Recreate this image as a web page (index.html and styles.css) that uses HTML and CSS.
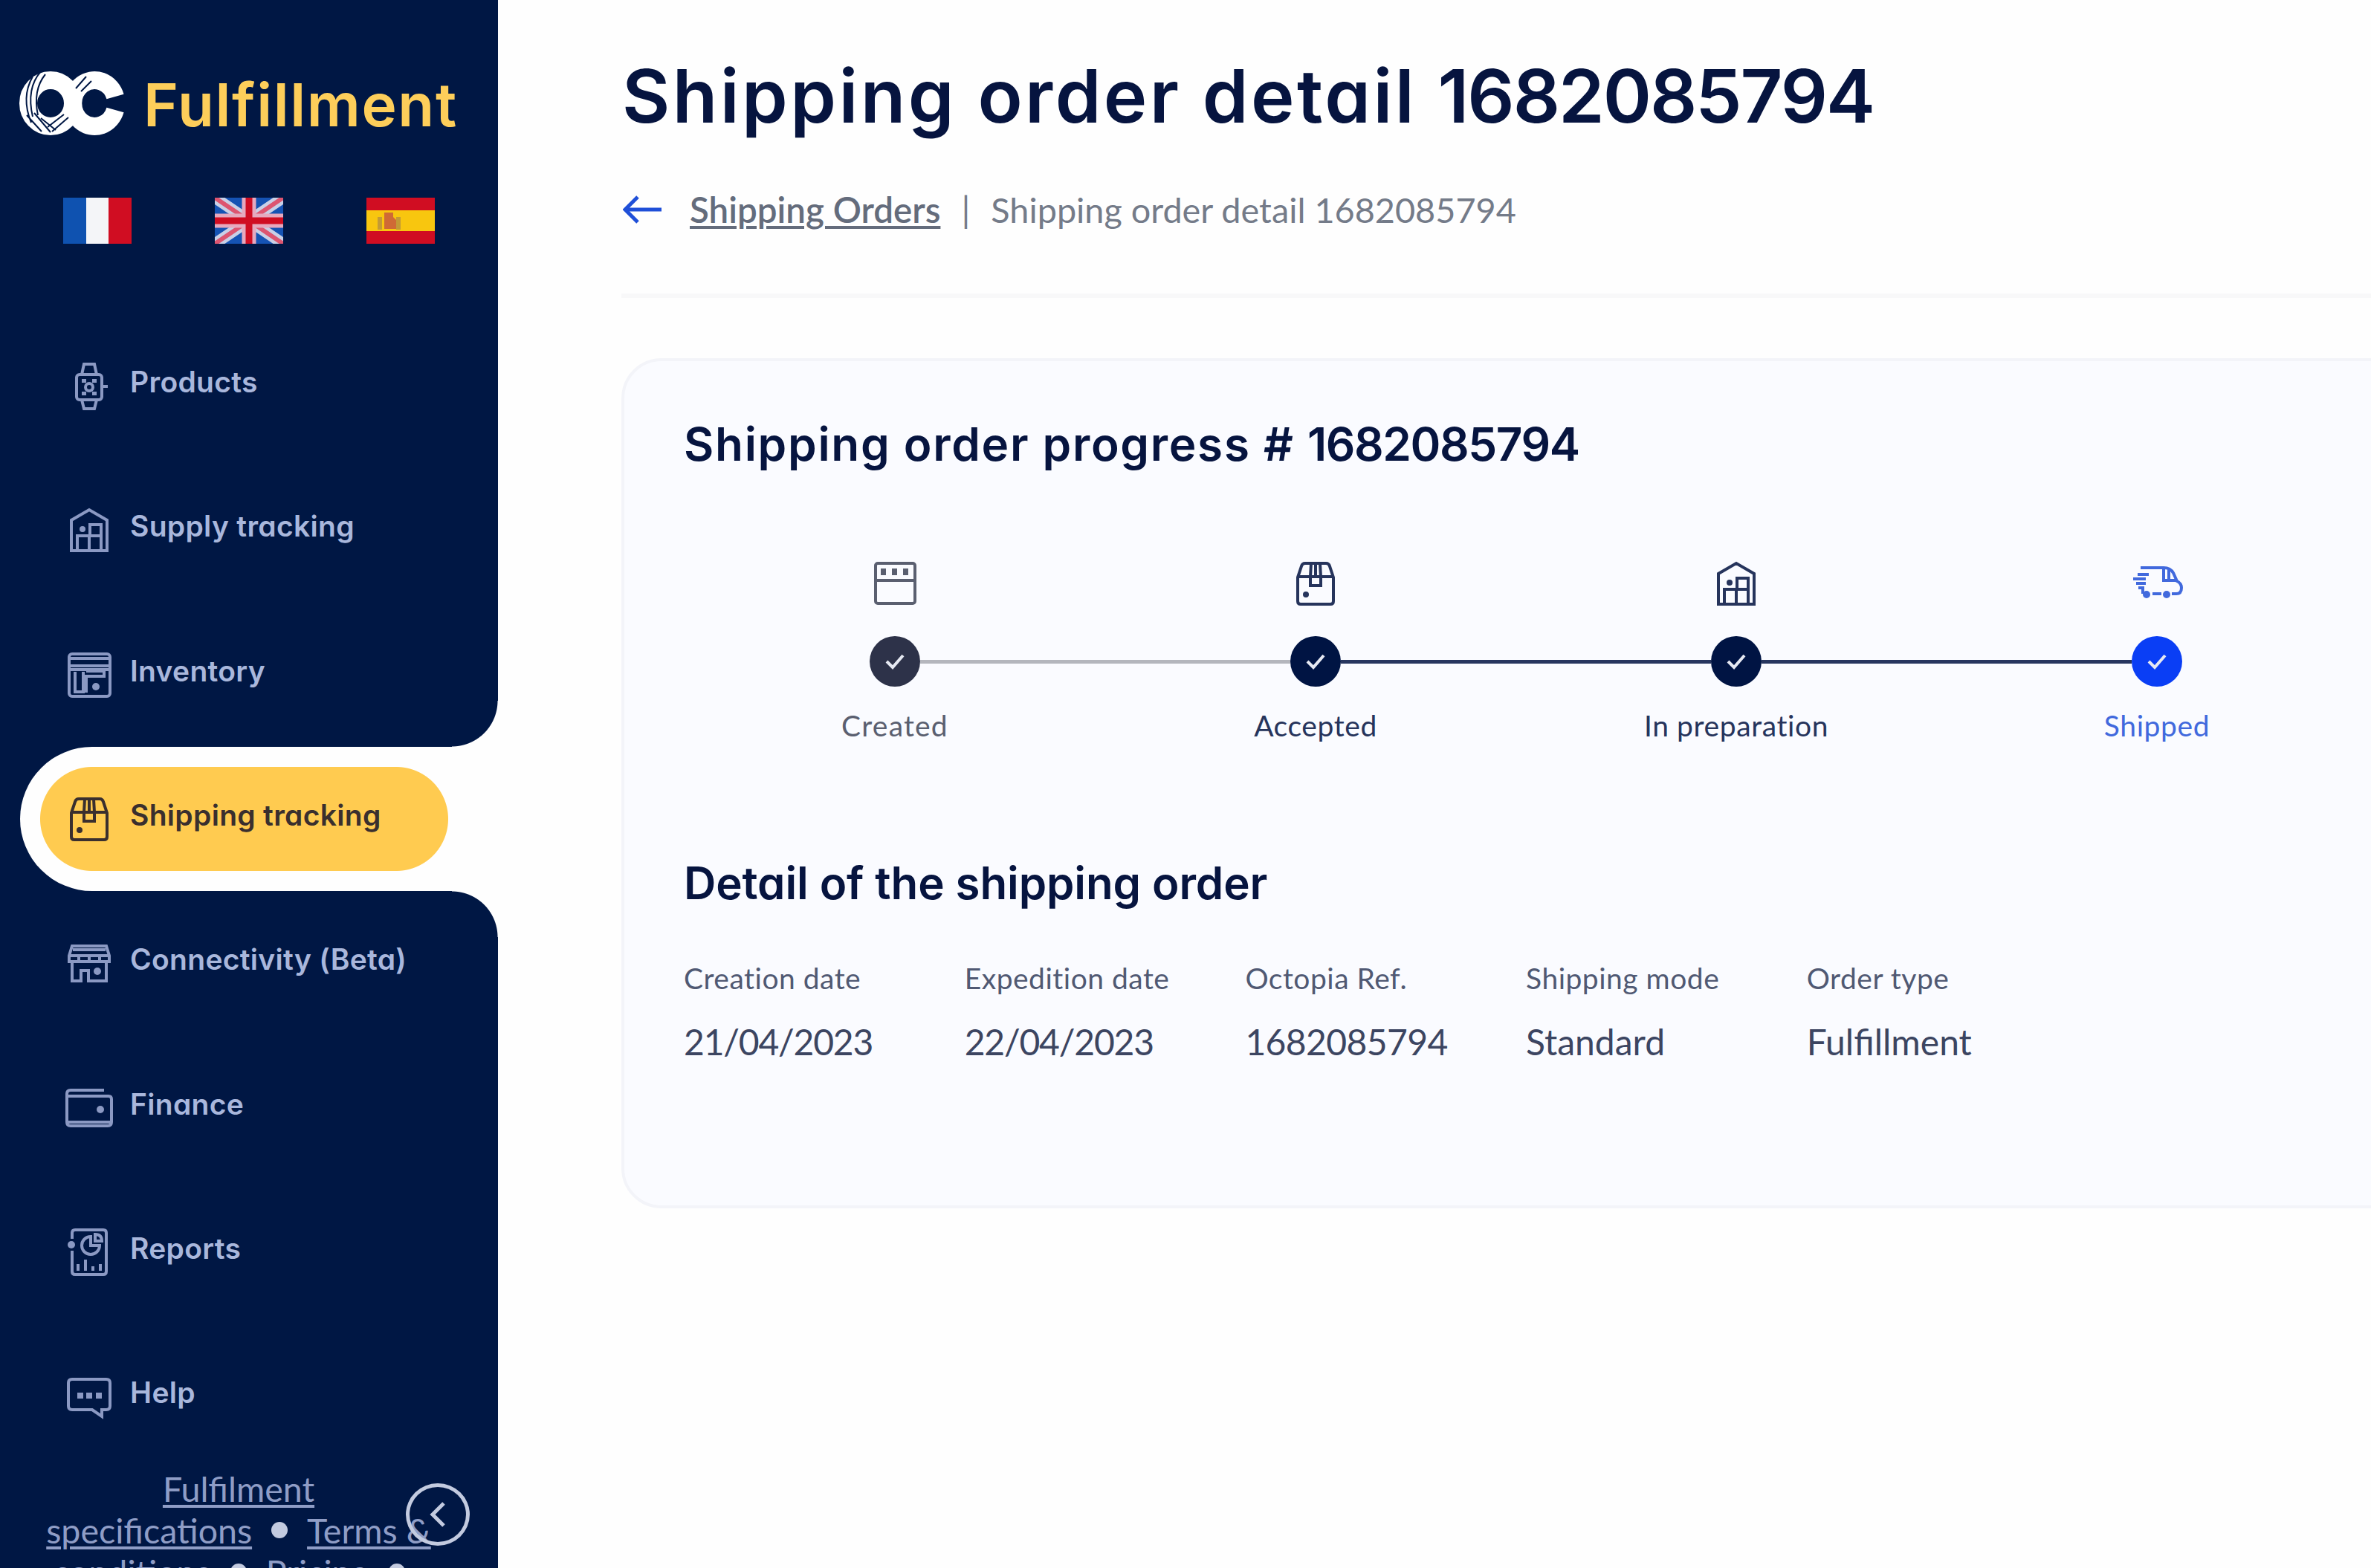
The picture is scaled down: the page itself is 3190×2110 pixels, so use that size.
FILE: index.html
```
<!DOCTYPE html>
<html lang="en">
<head>
  <meta charset="UTF-8">
  <meta name="viewport" content="width=device-width, initial-scale=1.0">
  <title>Shipping order detail 1682085794</title>
  <link rel="stylesheet" href="styles.css">
</head>
<body>
  <!-- Shared icons -->
  <svg class="sprite" aria-hidden="true">
    <symbol id="icon-box" viewBox="0 0 64 64">
      <path d="M8 24 13 9q1-4 5-4h28q4 0 5 4l5 15v32q0 4-4 4H12q-4 0-4-4zM8 23h48M26 5l-1 18v12h14V23L38 5M32 5v18"/>
      <circle class="dot" cx="19" cy="47" r="4"/>
    </symbol>
    <symbol id="icon-warehouse" viewBox="0 0 64 64">
      <path d="M16 60H8V19L32 5l24 14v41h-8M16 60V40h32v20zM32 40v20M33 40V25h15v35"/>
      <circle class="dot" cx="23" cy="31" r="4"/>
    </symbol>
  </svg>

  <div class="layout">
    <!-- Sidebar -->
    <aside class="sidebar">
      <div class="brand">
        <svg class="brand-logo" viewBox="0 0 144 88">
          <g fill="none" stroke="#fff" stroke-width="24">
            <ellipse cx="44" cy="44" rx="30" ry="31"/>
            <path d="M131 35A29 31 0 1 0 131 53"/>
          </g>
          <g fill="none" stroke="#001744" stroke-width="2">
            <path d="M31 1Q11 24 20 62M37 5Q20 26 27 60M20 8Q4 36 18 70M12 60l20 22M22 57l22 26M31 64l20 16M40 76l22-17M46 82l22-19M78 24l14-16M85 28l14-14"/>
          </g>
        </svg>
        <span class="brand-name">Fulfillment</span>
      </div>

      <div class="flags">
        <svg viewBox="0 0 92 62">
          <path fill="#0f52b0" d="M0 0h31v62H0z"/>
          <path fill="#f4f5f8" d="M31 0h30v62H31z"/>
          <path fill="#d00d22" d="M61 0h31v62H61z"/>
        </svg>
        <svg viewBox="0 0 92 62">
          <path fill="#1553b4" d="M0 0h92v62H0z"/>
          <path stroke="#c9d0e6" stroke-width="15" d="M0 0l92 62M92 0L0 62"/>
          <path stroke="#dd5570" stroke-width="6" d="M0 0l92 62M92 0L0 62"/>
          <path stroke="#e6a9be" stroke-width="19" d="M46 0v62M0 31h92"/>
          <path stroke="#d00d22" stroke-width="9" d="M46 0v62M0 31h92"/>
        </svg>
        <svg viewBox="0 0 92 62">
          <path fill="#d00d22" d="M0 0h92v62H0z"/>
          <path fill="#f8c60f" d="M0 17h92v28H0z"/>
          <path fill="#c39a35" d="M15 26h6v17h-6zM40 26h6v17h-6z"/>
          <path fill="#cf6a35" d="M24 20h12v6l4 4v12H24z"/>
        </svg>
      </div>

      <nav class="menu">
        <a class="menu-item" href="#">
          <svg class="icon" viewBox="0 0 64 64">
            <rect x="15" y="17" width="34" height="34" rx="4"/>
            <path d="M22 17l3-14h14l3 14M22 51l3 12h14l3-12M50 33h7"/>
            <circle cx="32" cy="34" r="5"/>
            <path class="dot" d="M22 23h6v5h-6zM36 23h6v5h-6zM22 40h6v5h-6zM36 40h6v5h-6z"/>
          </svg>
          <span>Products</span>
        </a>
        <a class="menu-item" href="#">
          <svg class="icon"><use href="#icon-warehouse"/></svg>
          <span>Supply tracking</span>
        </a>
        <a class="menu-item" href="#">
          <svg class="icon" viewBox="0 0 64 64">
            <rect x="5" y="4" width="55" height="57" rx="4"/>
            <path d="M5 10h55M5 20h55M5 25h55M13 28v27h11V28M28 27h24v7H28v22"/>
            <circle class="dot" cx="41" cy="48" r="5"/>
          </svg>
          <span>Inventory</span>
        </a>
        <a class="menu-item active" href="#">
          <svg class="icon"><use href="#icon-box"/></svg>
          <span>Shipping tracking</span>
        </a>
        <a class="menu-item" href="#">
          <svg class="icon" viewBox="0 0 64 64">
            <path d="M5 22 9 9h46l4 13v8H5zM10 14h44M5 22h54M18 22v8M32 22v8M46 22v8M9 30v26h12V42h10v14h24V30"/>
            <circle class="dot" cx="43" cy="43" r="5"/>
          </svg>
          <span>Connectivity (Beta)</span>
        </a>
        <a class="menu-item" href="#">
          <svg class="icon" viewBox="0 0 64 64">
            <path d="M52 8H7q-5 0-5 5v38q0 5 5 5h50q5 0 5-5V20q0-4-4-4H4M4 51h57"/>
            <circle class="dot" cx="47" cy="34" r="5"/>
          </svg>
          <span>Finance</span>
        </a>
        <a class="menu-item" href="#">
          <svg class="icon" viewBox="0 0 64 64">
            <path d="M9 14V6q0-4 4-4h38q4 0 4 4v52q0 4-4 4H13q-4 0-4-4V30M34 11a12 12 0 1 0 12 12H34zM40 8v9h9q0-9-9-9zM17 57V48M27 57V42M37 57v-6M47 57v-9"/>
            <circle class="dot" cx="8" cy="22" r="5"/>
          </svg>
          <span>Reports</span>
        </a>
        <a class="menu-item" href="#">
          <svg class="icon" viewBox="0 0 64 64">
            <path d="M9 9h46q5 0 5 5v31q0 5-5 5h-6v9l-13-9H9q-5 0-5-5V14q0-5 5-5z"/>
            <path class="dot" d="M16 27h8v8h-8zM28 27h8v8h-8zM41 27h8v8h-8z"/>
          </svg>
          <span>Help</span>
        </a>
      </nav>

      <div class="legal">
        <div><a href="#">Fulfilment</a></div>
        <div><a href="#">specifications</a><i class="bullet"></i><a href="#">Terms &amp;</a></div>
        <div><a href="#">conditions</a><i class="bullet"></i><a href="#">Pricing</a><i class="bullet"></i></div>
      </div>

      <button class="collapse" aria-label="Collapse menu">
        <svg viewBox="0 0 24 36"><path d="M20 3 5 18l15 15"/></svg>
      </button>
    </aside>

    <!-- Page content -->
    <main class="content">
      <h1>Shipping order detail <span class="number">1682085794</span></h1>
      <div class="breadcrumb">
        <svg class="back" viewBox="0 0 54 40"><path d="M52 20H3M20 3 3 20l17 17"/></svg>
        <a href="#">Shipping Orders</a>
        <span class="separator">|</span>
        <span class="current">Shipping order detail 1682085794</span>
      </div>
      <hr>

      <section class="card">
        <h2 class="progress-title">Shipping order progress # <span class="number">1682085794</span></h2>
        <div class="steps">
          <div class="step created">
            <svg class="icon" viewBox="0 0 64 64">
              <rect x="6" y="5" width="53" height="54" rx="3"/>
              <path d="M6 28h53"/>
              <path class="dot" d="M13 12h7v9h-7zM28 12h7v9h-7zM43 12h7v9h-7z"/>
            </svg>
            <div class="track">
              <span class="line none"></span>
              <span class="check"><svg viewBox="0 0 28 24"><path d="M3 12l8 8L25 4"/></svg></span>
              <span class="line grey"></span>
            </div>
            <span class="step-label">Created</span>
          </div>
          <div class="step">
            <svg class="icon"><use href="#icon-box"/></svg>
            <div class="track">
              <span class="line grey"></span>
              <span class="check"><svg viewBox="0 0 28 24"><path d="M3 12l8 8L25 4"/></svg></span>
              <span class="line"></span>
            </div>
            <span class="step-label">Accepted</span>
          </div>
          <div class="step">
            <svg class="icon"><use href="#icon-warehouse"/></svg>
            <div class="track">
              <span class="line"></span>
              <span class="check"><svg viewBox="0 0 28 24"><path d="M3 12l8 8L25 4"/></svg></span>
              <span class="line"></span>
            </div>
            <span class="step-label">In preparation</span>
          </div>
          <div class="step shipped">
            <svg class="icon truck" viewBox="0 0 68 64">
              <path d="M12 11h31q9 0 13 7l5 11q6 3 6 9 0 8-7 8h-6M43 11v17h18M50 13v15M28 46h12M8 20h15M2 26h17M6 32h13M9 38h6v8"/>
              <circle class="dot" cx="20" cy="47" r="5"/>
              <circle class="dot" cx="47" cy="47" r="5"/>
            </svg>
            <div class="track">
              <span class="line"></span>
              <span class="check"><svg viewBox="0 0 28 24"><path d="M3 12l8 8L25 4"/></svg></span>
              <span class="line none"></span>
            </div>
            <span class="step-label">Shipped</span>
          </div>
        </div>

        <h2 class="detail-title">Detail of the shipping order</h2>
        <dl class="details">
          <div><dt>Creation date</dt><dd class="date">21/04/2023</dd></div>
          <div><dt>Expedition date</dt><dd class="date">22/04/2023</dd></div>
          <div><dt>Octopia Ref.</dt><dd class="ref">1682085794</dd></div>
          <div><dt>Shipping mode</dt><dd>Standard</dd></div>
          <div><dt>Order type</dt><dd>Fulfillment</dd></div>
        </dl>
      </section>
    </main>
  </div>
</body>
</html>
```
FILE: styles.css
```
* {
  box-sizing: border-box;
}

body {
  margin: 0;
  font-family: Lato, 'Liberation Sans', sans-serif;
  background: #fefefe;
  color: #3c4561;
  overflow: hidden;
}

.sprite {
  display: none;
}

.layout {
  display: flex;
  height: 2110px;
  overflow: hidden;
}

.icon {
  width: 64px;
  height: 64px;
  flex: none;
  fill: none;
  stroke: currentColor;
  stroke-width: 4;
  overflow: visible;
}

.dot {
  fill: currentColor;
  stroke: none;
}

/* Sidebar */
.sidebar {
  position: relative;
  width: 670px;
  flex: none;
  background: #001744;
  display: flex;
  flex-direction: column;
}

.brand {
  display: flex;
  align-items: center;
  gap: 25px;
  padding: 95px 0 0 24px;
  height: 183px;
}

.brand-logo {
  width: 144px;
  height: 88px;
  flex: none;
}

.brand-name {
  font: 600 80px/88px Inter, sans-serif;
  font-feature-settings: 'cv11';
  letter-spacing: 1.6px;
  color: #fdce5a;
  white-space: nowrap;
  margin-top: 3px;
}

.flags {
  display: flex;
  justify-content: space-between;
  padding: 0 85px;
  margin-top: 83px;
}

.flags svg {
  width: 92px;
  height: 62px;
}

.menu {
  margin-top: 94px;
}

.menu-item {
  position: relative;
  display: flex;
  align-items: center;
  gap: 23px;
  height: 194.3px;
  padding-left: 88px;
  color: #8b99c3;
  text-decoration: none;
}

.menu-item span {
  font: 600 39px/48px Inter, sans-serif;
  font-feature-settings: 'cv11';
  letter-spacing: 0.3px;
  color: #a9b7dc;
  padding-bottom: 10px;
  white-space: nowrap;
}

/* Active item: white tab cut into the sidebar with a yellow pill */
.menu-item.active {
  margin-left: 27px;
  padding-left: 61px;
  border-radius: 97px 0 0 97px;
  color: #3a2f2e;
  background: linear-gradient(#ffcb50, #ffcb50) 97px 27px / 410px 140px no-repeat,
    radial-gradient(circle at 70px 70px, #ffcb50 69.5px, transparent 70.5px) 27px 27px / 70px 140px no-repeat,
    radial-gradient(circle at 0 70px, #ffcb50 69.5px, transparent 70.5px) 506px 27px / 70px 140px no-repeat,
    #fefefe;
}

.menu-item.active::before,
.menu-item.active::after {
  content: '';
  position: absolute;
  right: 0;
  width: 62px;
  height: 62px;
}

.menu-item.active::before {
  bottom: 100%;
  background: radial-gradient(circle at 0 0, #001744 61px, #fefefe 62px);
}

.menu-item.active::after {
  top: 100%;
  background: radial-gradient(circle at 0 100%, #001744 61px, #fefefe 62px);
}

.menu-item.active span {
  color: #3a2f2e;
}

/* Footer links */
.legal {
  width: 642px;
  margin-top: -1px;
  font-size: 46.5px;
  line-height: 56px;
  text-align: center;
  color: #8f9dc6;
}

.legal div {
  display: flex;
  align-items: center;
  justify-content: center;
  white-space: nowrap;
}

.legal a {
  color: inherit;
  text-underline-offset: 4px;
  text-decoration-thickness: 4px;
}

.bullet {
  width: 22px;
  height: 22px;
  border-radius: 50%;
  background: #c3cbe0;
  margin: 0 26px;
}

.collapse {
  position: absolute;
  left: 546px;
  top: 1996px;
  width: 86px;
  height: 84px;
  padding: 0;
  border: 5px solid #c3cbe0;
  border-radius: 50%;
  background: none;
}

.collapse svg {
  width: 24px;
  height: 36px;
  display: block;
  margin: auto;
  fill: none;
  stroke: #c3cbe0;
  stroke-width: 5;
}

/* Main content */
.content {
  flex: 1;
  min-width: 0;
  padding: 69px 0 0 166px;
}

h1,
h2 {
  margin: 0;
  font-family: Inter, sans-serif;
  font-weight: 600;
  font-feature-settings: 'cv11';
  color: #06143f;
  white-space: nowrap;
}

h1 {
  font-size: 99px;
  line-height: 120px;
  letter-spacing: 3.4px;
  padding-left: 1px;
}

h1 .number {
  letter-spacing: -2px;
}

.breadcrumb {
  display: flex;
  align-items: center;
  height: 60px;
  margin: 63px 0 83px;
  font-size: 47.5px;
  line-height: 60px;
  color: #747b89;
  white-space: nowrap;
}

.back {
  width: 54px;
  height: 40px;
  margin: 0 36px 0 2px;
  fill: none;
  stroke: #1f4fd8;
  stroke-width: 5;
}

.breadcrumb a {
  color: #646c7c;
  font-weight: 600;
  text-underline-offset: 4px;
  text-decoration-thickness: 4px;
}

.separator {
  margin: 0 28px;
}

.current {
  font-size: 46.8px;
}

hr {
  height: 6px;
  margin: 0 0 81px;
  border: none;
  background: #f8f8f9;
}

.card {
  height: 1144px;
  margin-right: -60px;
  padding: 72px 80px;
  background: #fafbff;
  border: 4px solid #f3f4f9;
  border-radius: 54px;
}

h2 {
  line-height: 80px;
}

.progress-title {
  font-size: 62px;
  letter-spacing: 1.7px;
}

.progress-title .number {
  letter-spacing: -1.4px;
}

.detail-title {
  font-size: 60px;
  letter-spacing: -0.1px;
  margin-top: 148px;
}

/* Progress steps */
.steps {
  display: grid;
  grid-template-columns: repeat(4, 566px);
  margin: 115px 0 0 1px;
}

.step {
  display: flex;
  flex-direction: column;
  align-items: center;
  color: #26345c;
}

.track {
  display: flex;
  align-items: center;
  width: 100%;
  margin: 39px 0 28px;
}

.line {
  flex: 1;
  height: 5px;
  background: #27365f;
}

.line.grey {
  background: #b4b6bd;
}

.line.none {
  background: none;
}

.check {
  width: 68px;
  height: 68px;
  border-radius: 50%;
  background: #001443;
  display: flex;
  align-items: center;
  justify-content: center;
}

.check svg {
  width: 28px;
  height: 24px;
  fill: none;
  stroke: #e6e9f2;
  stroke-width: 4;
}

.step-label {
  font-size: 39px;
  line-height: 48px;
  letter-spacing: 0.6px;
  white-space: nowrap;
}

.created {
  color: #5a5f70;
}

.created .step-label {
  letter-spacing: 1.2px;
}

.created .check {
  background: #2d3249;
}

.shipped {
  color: #4169dd;
}

.shipped .check {
  background: #0a3ef5;
}

.truck {
  width: 68px;
}

/* Order details */
.details {
  display: grid;
  grid-template-columns: repeat(5, 377.7px);
  margin: 64px 0 0;
  white-space: nowrap;
}

dt {
  font-size: 39px;
  line-height: 48px;
  letter-spacing: 0.5px;
  color: #505973;
}

dd {
  margin: 32px 0 0;
  font-size: 48px;
  line-height: 60px;
}

.date {
  letter-spacing: -1.2px;
}

.ref {
  letter-spacing: -0.6px;
}
```
